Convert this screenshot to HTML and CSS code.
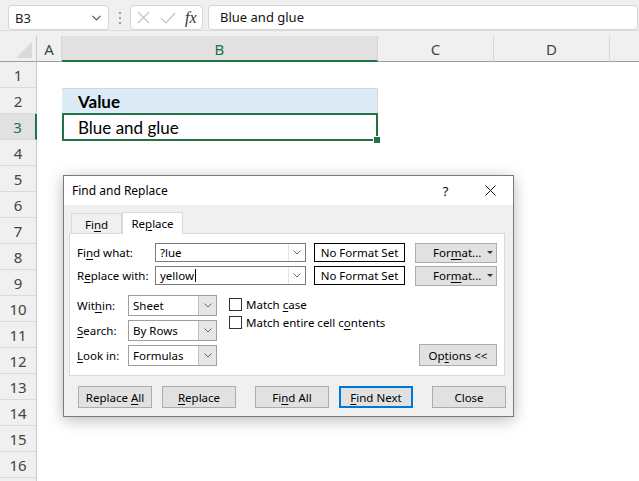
FILE: index.html
```html
<!DOCTYPE html>
<html>
<head>
<meta charset="utf-8">
<link rel="stylesheet" href="styles.css">
</head>
<body>
<div class="app">
  <div class="fbar">
    <div class="namebox"><span>B3</span>
      <svg class="chev" width="9" height="6" viewBox="0 0 9 6"><polyline points="0.5,0.8 4.5,4.8 8.5,0.8" fill="none" stroke="#555" stroke-width="1.2"/></svg>
    </div>
    <div class="grip"><svg width="4" height="14" viewBox="0 0 4 14"><circle cx="2" cy="2" r="1.1" fill="#8a8a8a"/><circle cx="2" cy="7" r="1.1" fill="#8a8a8a"/><circle cx="2" cy="12" r="1.1" fill="#8a8a8a"/></svg></div>
    <div class="fxbox">
      <svg width="13" height="13" viewBox="0 0 13 13"><path d="M1 1 L12 12 M12 1 L1 12" stroke="#c4c4c4" stroke-width="1.2" fill="none"/></svg>
      <svg width="16" height="12" viewBox="0 0 16 12"><polyline points="1,6 6,11 15,1" stroke="#c4c4c4" stroke-width="1.2" fill="none"/></svg>
      <span class="fx">fx</span>
    </div>
    <div class="finput">Blue and glue</div>
  </div>

  <div class="sheet">
    <div class="colhead">
      <div class="corner"><svg width="17" height="16" viewBox="0 0 17 16"><polygon points="16,0 16,16 0,16" fill="#dadada"/></svg></div>
      <div class="ch ca">A</div>
      <div class="ch cb sel-h">B</div>
      <div class="ch cc">C</div>
      <div class="ch cd">D</div>
      <div class="ch ce"></div>
    </div>
    <div class="row"><div class="rh">1</div><div class="cell ca"></div><div class="cell cb"></div></div>
    <div class="row"><div class="rh">2</div><div class="cell ca"></div><div class="cell cb hdr">Value</div></div>
    <div class="row"><div class="rh rh-sel">3</div><div class="cell ca"></div><div class="cell cb active">Blue and glue</div></div>
    <div class="row"><div class="rh">4</div></div>
    <div class="row"><div class="rh">5</div></div>
    <div class="row"><div class="rh">6</div></div>
    <div class="row"><div class="rh">7</div></div>
    <div class="row"><div class="rh">8</div></div>
    <div class="row"><div class="rh">9</div></div>
    <div class="row"><div class="rh">10</div></div>
    <div class="row"><div class="rh">11</div></div>
    <div class="row"><div class="rh">12</div></div>
    <div class="row"><div class="rh">13</div></div>
    <div class="row"><div class="rh">14</div></div>
    <div class="row"><div class="rh">15</div></div>
    <div class="row"><div class="rh">16</div></div>
    <div class="row"><div class="rh"></div></div>
  </div>

  <div class="dlg">
    <div class="title">
      <span class="ttext">Find and Replace</span>
      <span class="tbtn">?</span>
      <span class="tbtn"><svg width="11" height="11" viewBox="0 0 11 11"><path d="M0.5 0.5 L10.5 10.5 M10.5 0.5 L0.5 10.5" stroke="#111" stroke-width="1" fill="none"/></svg></span>
    </div>
    <div class="tabs">
      <div class="tab"><span>Fi<u>n</u>d</span></div>
      <div class="tab on"><span>Re<u>p</u>lace</span></div>
    </div>
    <div class="panel">
      <div class="frow">
        <span class="flabel">Fi<u>n</u>d what:</span>
        <div class="combo"><span class="ctext">?lue</span><span class="cbtn"><svg width="8" height="5" viewBox="0 0 8 5"><polyline points="0.5,0.5 4,4 7.5,0.5" fill="none" stroke="#666" stroke-width="1"/></svg></span></div>
        <div class="nofmt">No Format Set</div>
        <div class="btn fmt"><span>For<u>m</u>at...</span><span class="tri"></span></div>
      </div>
      <div class="frow r2">
        <span class="flabel">R<u>e</u>place with:</span>
        <div class="combo"><span class="ctext">yellow<span class="caret"></span></span><span class="cbtn"><svg width="8" height="5" viewBox="0 0 8 5"><polyline points="0.5,0.5 4,4 7.5,0.5" fill="none" stroke="#666" stroke-width="1"/></svg></span></div>
        <div class="nofmt">No Format Set</div>
        <div class="btn fmt"><span>For<u>m</u>at...</span><span class="tri"></span></div>
      </div>
      <div class="lower">
        <div class="opts">
          <span class="olabel">Wit<u>h</u>in:</span>
          <div class="sel"><span class="stext">Sheet</span><span class="sbtn"><svg width="8" height="5" viewBox="0 0 8 5"><polyline points="0.5,0.5 4,4 7.5,0.5" fill="none" stroke="#666" stroke-width="1"/></svg></span></div>
          <span class="olabel"><u>S</u>earch:</span>
          <div class="sel"><span class="stext">By Rows</span><span class="sbtn"><svg width="8" height="5" viewBox="0 0 8 5"><polyline points="0.5,0.5 4,4 7.5,0.5" fill="none" stroke="#666" stroke-width="1"/></svg></span></div>
          <span class="olabel"><u>L</u>ook in:</span>
          <div class="sel"><span class="stext">Formulas</span><span class="sbtn"><svg width="8" height="5" viewBox="0 0 8 5"><polyline points="0.5,0.5 4,4 7.5,0.5" fill="none" stroke="#666" stroke-width="1"/></svg></span></div>
        </div>
        <div class="checks">
          <div class="chk"><span class="box"></span><span>Match <u>c</u>ase</span></div>
          <div class="chk"><span class="box"></span><span>Match entire cell c<u>o</u>ntents</span></div>
        </div>
        <div class="btn optbtn"><span>Op<u>t</u>ions &lt;&lt;</span></div>
      </div>
    </div>
    <div class="actions">
      <div class="btn act"><span>Replace <u>A</u>ll</span></div>
      <div class="btn act g1"><span><u>R</u>eplace</span></div>
      <div class="btn act g2"><span>Fi<u>n</u>d All</span></div>
      <div class="btn act g1 def"><span><u>F</u>ind Next</span></div>
      <div class="btn act g2"><span>Close</span></div>
    </div>
  </div>
</div>
</body>
</html>
```
FILE: styles.css
```css
* { box-sizing: border-box; margin: 0; padding: 0; }
html, body { width: 639px; height: 481px; overflow: hidden; background: #fff; }
body { font-family: "Noto Sans", "Open Sans", sans-serif; color: #000; }
.app { position: relative; width: 639px; height: 481px; overflow: hidden; background: #fff; }

/* formula bar */
.fbar { height: 31px; background: #f0f0f0; display: flex; align-items: flex-start; padding: 5px 1px 0 8px; border-bottom: 1px solid #dcdcdc; }
.namebox { width: 101px; height: 25px; background: #fff; border: 1px solid #d6d6d6; border-radius: 4px; display: flex; align-items: center; justify-content: space-between; padding: 0 7px 0 6px; font-size: 13px; color: #222; }
.chev { margin-top: 1px; }
.grip { width: 21px; height: 25px; display: flex; align-items: center; justify-content: center; }
.fxbox { width: 73px; height: 25px; background: #fff; border: 1px solid #d6d6d6; border-radius: 4px; display: flex; align-items: center; padding-left: 6px; gap: 10px; }
.fx { font-family: "Liberation Serif", serif; font-style: italic; font-size: 16px; color: #333; margin-left: -1px; }
.finput { flex: 1; height: 25px; margin-left: 5px; background: #fff; border: 1px solid #d6d6d6; border-radius: 4px; padding-left: 11px; font-size: 13px; line-height: 23px; color: #111; }

/* sheet */
.sheet { display: flex; flex-direction: column; }
.colhead { display: flex; height: 31px; background: #f0f0f0; padding-top: 5px; }
.corner { width: 37px; height: 26px; border-right: 1px solid #c8c8c8; border-bottom: 1px solid #9e9e9e; display: flex; justify-content: flex-end; align-items: flex-end; padding: 0 3px 3px 0; }
.ch { height: 26px; border-right: 1px solid #d6d6d6; border-bottom: 1px solid #9e9e9e; font-size: 15px; color: #444; display: flex; align-items: center; justify-content: center; padding-top: 1px; }
.ca { width: 25px; }
.cb { width: 316px; }
.cc { width: 116px; }
.cd { width: 116px; }
.ce { flex: 1; border-right: none; }
.ch.sel-h { background: #e1e1e1; color: #217346; border-bottom: 2px solid #217346; }

.row { display: flex; height: 26px; }
.rh { width: 37px; height: 26px; background: #f0f0f0; border-right: 1px solid #c8c8c8; border-bottom: 1px solid #dadada; font-size: 15px; color: #444; display: flex; align-items: center; justify-content: center; }
.rh-sel { background: #e1e1e1; color: #217346; border-right: 2px solid #217346; width: 37px; }
.cell { height: 26px; font-family: "Lato", "Noto Sans", sans-serif; font-size: 17px; padding-left: 16px; line-height: 27px; }
.cell.hdr { background: #ddebf7; font-weight: bold; border-top: 1px solid #cfd9e3; border-right: 1px solid #cfd9e3; line-height: 25px; }
.cell.active { position: relative; }
.cell.active::after { content: ""; position: absolute; left: 0; top: -1px; right: 0; bottom: -1px; border: 2px solid #217346; }
.cell.active::before { content: ""; position: absolute; right: -3px; bottom: -4px; width: 6px; height: 6px; background: #217346; border: 1px solid #fff; z-index: 2; }

/* dialog */
.dlg { position: absolute; left: 63px; top: 175px; width: 451px; height: 242px; background: #f0f0f0; border: 1px solid #7a7a7a; box-shadow: 0 3px 14px rgba(0,0,0,0.28); font-size: 11.5px; }
.title { height: 29px; background: #fff; display: flex; align-items: center; padding-left: 8px; }
.ttext { flex: 1; font-size: 12px; }
.tbtn { width: 45px; height: 29px; display: flex; align-items: center; justify-content: center; font-size: 13px; }
.tabs { display: flex; align-items: flex-end; height: 28px; padding-left: 7px; }
.tab { width: 51px; height: 20px; border: 1px solid #d9d9d9; border-bottom: none; display: flex; align-items: center; justify-content: center; padding-top: 1px; }
.tab.on { width: 61px; height: 22px; background: #fff; margin-bottom: -1px; position: relative; z-index: 1; padding-top: 0; }
.panel { margin-left: 5px; width: 436px; height: 143px; background: #fff; border: 1px solid #d9d9d9; padding: 9px 7px 0 7px; }
.frow { display: flex; align-items: center; height: 19px; }
.frow.r2 { margin-top: 4px; }
.flabel { width: 78px; white-space: nowrap; }
.combo { width: 151px; height: 19px; border: 1px solid #7a7a7a; display: flex; align-items: stretch; }
.ctext { flex: 1; padding-left: 4px; line-height: 17px; display: flex; align-items: center; }
.caret { display: inline-block; width: 1px; height: 13px; background: #000; margin-left: 1px; }
.cbtn { width: 17px; border-left: 1px solid #e3e3e3; display: flex; align-items: center; justify-content: center; }
.nofmt { width: 91px; height: 19px; margin-left: 8px; border: 1px solid #000; display: flex; align-items: center; justify-content: center; }
.btn { background: #e1e1e1; border: 1px solid #adadad; display: flex; align-items: center; justify-content: center; white-space: pre; }
.fmt { width: 82px; height: 20px; margin-left: 10px; justify-content: flex-start; padding-left: 17px; }
.tri { margin-left: auto; margin-right: 3px; width: 0; height: 0; border-left: 3px solid transparent; border-right: 3px solid transparent; border-top: 3px solid #333; }

.lower { display: flex; margin-top: 10px; }
.opts { display: grid; grid-template-columns: 51px 89px; grid-auto-rows: 21px; row-gap: 4px; align-items: center; }
.sel { height: 21px; border: 1px solid #a0a0a0; display: flex; align-items: stretch; }
.stext { flex: 1; padding-left: 4px; display: flex; align-items: center; }
.sbtn { width: 18px; background: #e6e6e6; border-left: 1px solid #c0c0c0; display: flex; align-items: center; justify-content: center; }
.checks { margin-left: 12px; padding-top: 3px; display: flex; flex-direction: column; gap: 5px; }
.chk { display: flex; align-items: center; height: 13px; white-space: nowrap; }
.box { width: 13px; height: 13px; border: 1px solid #333; background: #fff; margin-right: 4px; }
.optbtn { margin-left: auto; align-self: flex-end; width: 78px; height: 22px; }

.actions { display: flex; margin-top: 10px; padding-left: 14px; }
.act { width: 74px; height: 22px; }
.g1 { margin-left: 10px; }
.g2 { margin-left: 19px; }
.def { border: 2px solid #0078d7; }
u { text-decoration: underline; text-underline-offset: 2px; }
```
